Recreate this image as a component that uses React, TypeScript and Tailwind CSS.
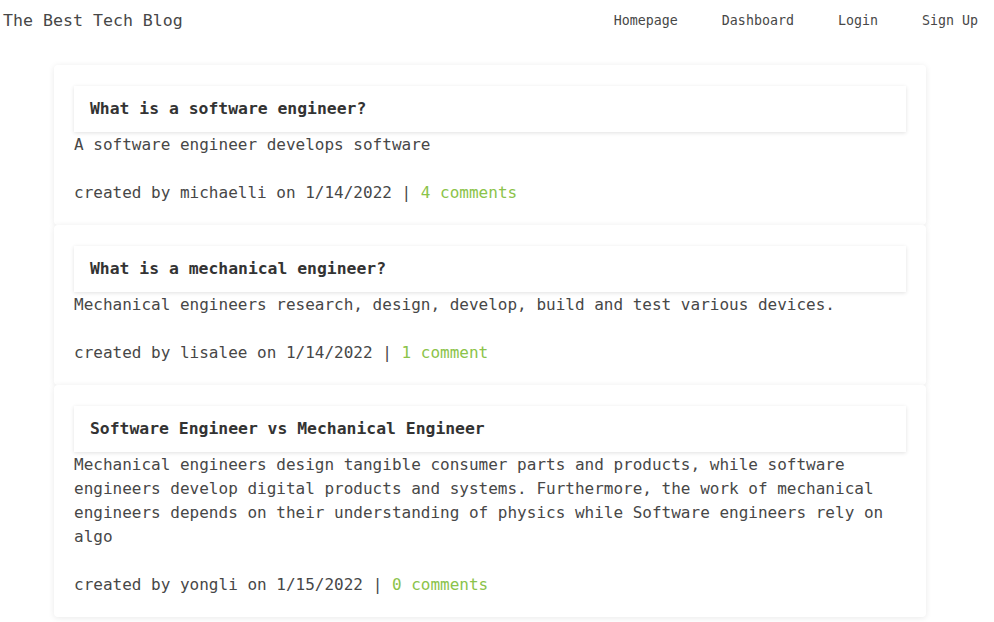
import React from "react";

const posts = [
  {
    title: "What is a software engineer?",
    body: "A software engineer develops software",
    user: "michaelli",
    date: "1/14/2022",
    comments: "4 comments",
  },
  {
    title: "What is a mechanical engineer?",
    body: "Mechanical engineers research, design, develop, build and test various devices.",
    user: "lisalee",
    date: "1/14/2022",
    comments: "1 comment",
  },
  {
    title: "Software Engineer vs Mechanical Engineer",
    body: "Mechanical engineers design tangible consumer parts and products, while software engineers develop digital products and systems. Furthermore, the work of mechanical engineers depends on their understanding of physics while Software engineers rely on algo",
    user: "yongli",
    date: "1/15/2022",
    comments: "0 comments",
  },
];

export default function App() {
  return (
    <div
      className="min-h-[622px] bg-white text-[#474747]"
      style={{ fontFamily: '"DejaVu Sans Mono", "Liberation Mono", monospace' }}
    >
      <header className="flex h-[41px] items-center justify-between pt-[1px]">
        <h1 className="pl-[3px] text-[16.6px] font-normal text-[#474747]">The Best Tech Blog</h1>
        <nav className="flex items-center gap-[44px] pr-[16px] text-[13.3px] text-[#474747]">
          <a>Homepage</a>
          <a>Dashboard</a>
          <a>Login</a>
          <a>Sign Up</a>
        </nav>
      </header>
      <main className="ml-[54px] mt-[24px] flex w-[872px] flex-col">
        {posts.map((p) => (
          <article
            key={p.title}
            className="rounded-[4px] bg-white px-[20px] pb-[20px] pt-[21px] shadow-[0_1px_6px_rgba(0,0,0,0.09)]"
          >
            <h2 className="flex h-[46px] items-center bg-white px-[16px] text-[16.4px] font-bold text-[#333] shadow-[0_1px_4px_rgba(0,0,0,0.12)]">
              {p.title}
            </h2>
            <p className="mt-[1px] text-[16px] leading-[24px]">{p.body}</p>
            <p className="mt-[24px] text-[16px] leading-[24px]">
              created by {p.user} on {p.date} | <span className="text-[#8bc34a]">{p.comments}</span>
            </p>
          </article>
        ))}
      </main>
    </div>
  );
}
